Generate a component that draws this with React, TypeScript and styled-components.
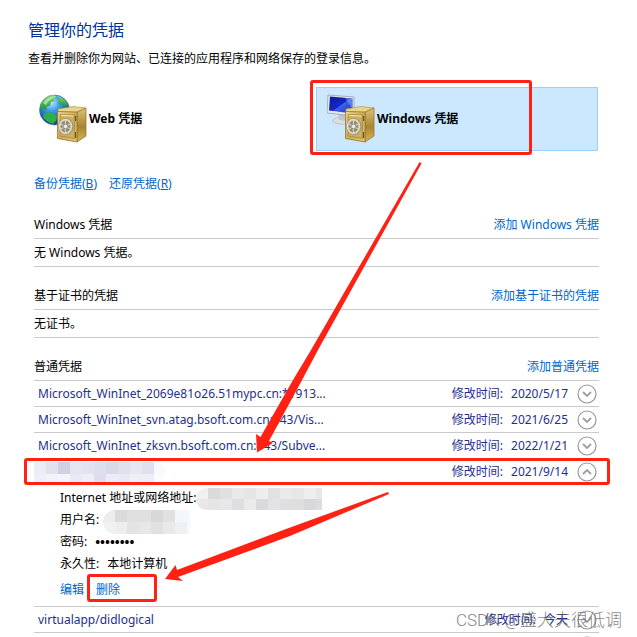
import React from "react";
import styled, { createGlobalStyle } from "styled-components";

const RED = "#ff2214";

const Global = createGlobalStyle`
  * { box-sizing: border-box; }
  html, body { margin: 0; background: #fff; }
  body {
    font-family: "Noto Sans", "Noto Sans CJK SC", sans-serif;
    font-size: 12px;
    line-height: 20px;
    color: #000;
  }
  h1, h2, p, ul, dl, dd { margin: 0; padding: 0; font-weight: 400; }
  button { font: inherit; color: inherit; background: none; border: 0; padding: 0; text-align: left; }
`;

const Page = styled.main`
  position: relative;
  height: 100vh;
  overflow: hidden;
  padding: 16px 38px 0 28px;
`;

const Title = styled.h1`
  font-size: 16px;
  line-height: 28px;
  color: #003399;
`;

const Intro = styled.p`
  margin-top: 5px;
`;

const Tiles = styled.div`
  display: grid;
  grid-template-columns: 1fr 1fr;
  gap: 6px;
  margin: 18px 1px 0 0;
`;

const Tile = styled.button<{ $selected?: boolean }>`
  position: relative;
  display: flex;
  align-items: center;
  gap: 2px;
  height: 64px;
  padding: 0 10px;
  border: 1px solid ${(p) => (p.$selected ? "#99d1ff" : "transparent")};
  background: ${(p) => (p.$selected ? "#cce8ff" : "transparent")};
  font-weight: 700;
`;

const Link = styled.a`
  color: #0066cc;
  text-decoration: none;
`;

const Actions = styled.nav`
  display: flex;
  gap: 12px;
  margin: 23px 0 0 6px;
`;

const Section = styled.section`
  margin-left: 6px;
`;

const SectionHead = styled.header<{ $gap: number }>`
  display: flex;
  justify-content: space-between;
  margin-top: ${(p) => p.$gap}px;
  padding-bottom: 3px;
  border-bottom: 1px solid #cacaca;
`;

const SectionTitle = styled.h2`
  font-size: 12px;
`;

const Empty = styled.p`
  padding: 4px 0 3px;
  border-bottom: 1px solid #cacaca;
`;

const List = styled.ul`
  list-style: none;
`;

const Item = styled.li`
  position: relative;
  border-bottom: 1px solid #cacaca;
`;

const Row = styled.div<{ $flush?: boolean }>`
  position: relative;
  display: flex;
  align-items: center;
  height: 25px;
  padding: 0 2px 0 ${(p) => (p.$flush ? 0 : 4)}px;
  color: #1f2f8c;
`;

const Name = styled.span`
  flex: 1;
`;

const Stamp = styled.span`
  display: flex;
  gap: 8px;
  margin-right: 9px;
`;

const Toggle = styled.button`
  display: flex;
`;

const Details = styled.dl`
  padding: 4px 0 0 26px;
`;

const Field = styled.div<{ $gap?: number }>`
  display: flex;
  gap: ${(p) => p.$gap ?? 8}px;
  height: 22px;
`;

const Password = styled.dd`
  font-size: 13px;
  font-weight: 700;
`;

const ItemActions = styled.div`
  display: flex;
  gap: 12px;
  padding: 4px 0 6px 26px;
`;

const Marked = styled.span`
  position: relative;
`;

const Mark = styled.span<{ $inset: string }>`
  position: absolute;
  inset: ${(p) => p.$inset};
  border: 3px solid ${RED};
  border-radius: 3px;
  pointer-events: none;
`;

const Arrows = styled.svg`
  position: absolute;
  top: 0;
  left: 0;
  pointer-events: none;
`;

const Watermark = styled.div`
  position: absolute;
  right: 15px;
  bottom: 5px;
  font: 300 17px/24px Roboto, "Noto Sans CJK SC", sans-serif;
  color: rgba(100, 100, 100, 0.8);
  white-space: nowrap;
  pointer-events: none;
`;

const MosaicSvg = styled.svg`
  display: block;
  flex: none;
`;

function Mosaic({ id, width, height, cell, rows, left = 0, right = 0 }: {
  id: string; width: number; height: number; cell: number; rows: string[][]; left?: number; right?: number;
}) {
  const r = height / 2;
  const d = `M${left ? r : 0} 0H${width - (right ? r : 0)}${right ? `A${r} ${r} 0 0 1 ${width - r} ${height}` : `V${height}`}H${left ? r : 0}${left ? `A${r} ${r} 0 0 1 ${r} 0` : ""}Z`;
  return (
    <MosaicSvg width={width} height={height} aria-hidden="true" shapeRendering="crispEdges">
      <clipPath id={id}><path d={d} /></clipPath>
      <g clipPath={`url(#${id})`}>
        {rows.map((row, y) => row.map((c, x) => (
          <rect key={`${x}-${y}`} x={x * 12} y={y * cell} width="12" height={cell} fill={c} />
        )))}
      </g>
    </MosaicSvg>
  );
}

function Safe() {
  return (
    <g>
      <path d="M19 15 34 12.500 47 14 38 18.500 19 18Z" fill="#e8d48c" stroke="#a98a35" strokeWidth=".6" />
      <path d="M38 18 47 14V42L38 48Z" fill="url(#safeSide)" stroke="#8c6d1f" strokeWidth=".7" />
      <path d="M18.500 17.500 38 18V48L18.500 44.500Z" fill="url(#safeFront)" stroke="#95762a" strokeWidth=".8" />
      <path d="M21 20.500 35.500 21V44.500L21 42Z" fill="#cfae59" stroke="#a3833a" strokeWidth=".7" />
      <path d="M22 21.500 34.500 22" stroke="#f6e8ac" strokeWidth="1" />
      <path d="M36.600 22v5M36.600 38v6" stroke="#5c4718" strokeWidth="1" />
      <ellipse cx="27" cy="32.500" rx="7.200" ry="8" fill="#b8a46a" stroke="#858585" strokeWidth=".6" />
      <ellipse cx="26.500" cy="32.500" rx="5.900" ry="6.800" fill="#9d8a56" stroke="#d9dbdd" strokeWidth="1.700" />
      <path d="M26.500 26v13M20.800 29.500 32.300 35.500M20.800 35.500 32.300 29.500" stroke="#cfd2d6" strokeWidth="1.300" />
      <circle cx="26.500" cy="32.500" r="2.200" fill="#eceef0" stroke="#707377" strokeWidth=".6" />
    </g>
  );
}

function Defs() {
  return (
    <defs>
      <radialGradient id="globe" cx=".4" cy=".25" r=".8">
        <stop offset="0" stopColor="#b5eaff" /><stop offset=".35" stopColor="#3b9ee6" />
        <stop offset=".75" stopColor="#164fb4" /><stop offset="1" stopColor="#0c2f7c" />
      </radialGradient>
      <linearGradient id="land" x2="0" y2="1">
        <stop stopColor="#8bd66a" /><stop offset="1" stopColor="#16903a" />
      </linearGradient>
      <linearGradient id="screen" x2="1" y2="1">
        <stop stopColor="#0b1a9e" /><stop offset=".5" stopColor="#1528c4" /><stop offset=".52" stopColor="#3f62e8" /><stop offset="1" stopColor="#1430c8" />
      </linearGradient>
      <linearGradient id="safeFront" x2="1" y2="1">
        <stop stopColor="#ecd78f" /><stop offset=".5" stopColor="#cfac54" /><stop offset="1" stopColor="#e2c878" />
      </linearGradient>
      <linearGradient id="safeSide" x2="0" y2="1">
        <stop stopColor="#dcc477" /><stop offset=".55" stopColor="#a98532" /><stop offset="1" stopColor="#d6b65b" />
      </linearGradient>
    </defs>
  );
}

function WebIcon() {
  return (
    <svg width="48" height="50" viewBox="0 0 48 50" aria-hidden="true">
      <Defs />
      <circle cx="15.500" cy="16" r="15" fill="url(#globe)" stroke="#3f75ad" strokeWidth=".6" />
      <path d="M2 9C5 4 10 1 15 1L17 3 14 5 16 7 12 8 11 12 8 12 7 16 4 15 2 17Q1 12 2 9Z" fill="url(#land)" />
      <path d="M18 2 22 3 27 7 29 11 26 13 23 10 20 11 19 7 21 5Z" fill="url(#land)" />
      <path d="M5 20 10 18 15 20 18 23 17 27 14 30Q7 28 4 23Z" fill="#2fb045" />
      <path d="M4 9Q9 2 18 2 10 5 7 11Z" fill="#e5fbe5" opacity=".55" />
      <Safe />
    </svg>
  );
}

function WindowsIcon() {
  return (
    <svg width="48" height="50" viewBox="0 0 48 50" aria-hidden="true">
      <path d="M5 27Q11 21 19 24V30Q10 31 5 27Z" fill="#dcdfe2" stroke="#a8afb5" strokeWidth=".6" />
      <path d="M11 18 18 19V27L12 26Z" fill="#bfc5ca" />
      <path d="M1 1 27 3V22L0 19Z" fill="#e4e8ec" stroke="#8e9aa6" strokeWidth=".7" />
      <path d="M3 2.500 25.500 4.500V19.500L2 16.500Z" fill="url(#screen)" />
      <path d="M18 4 25.500 4.500V15Z" fill="#82a4f4" opacity=".55" />
      <Safe />
    </svg>
  );
}

function Chevron({ up }: { up?: boolean }) {
  return (
    <svg width="20" height="20" viewBox="0 0 20 20" fill="none" aria-hidden="true">
      <circle cx="10" cy="10" r="9" stroke="#999" strokeWidth="1.200" />
      <path d={up ? "M6 12 10 8 14 12" : "M6 8 10 12 14 8"} stroke="#a0a0a0" strokeWidth="1.800" />
    </svg>
  );
}

function CredentialRow({ name, date, open, children }: {
  name?: string; date?: string; open?: boolean; children?: React.ReactNode;
}) {
  return (
    <Row $flush={open}>
      <Name>{children ?? name}</Name>
      {date && <Stamp><span>修改时间:</span><span>{date}</span></Stamp>}
      <Toggle aria-label={open ? "收起" : "展开"} aria-expanded={!!open}><Chevron up={open} /></Toggle>
      {open && <Mark $inset="-1px -11px -1px -10px" />}
    </Row>
  );
}

const credentials = [
  { name: "Microsoft_WinInet_2069e81o26.51mypc.cn:*1913...", date: "2020/5/17" },
  { name: "Microsoft_WinInet_svn.atag.bsoft.com.cn:443/Vis...", date: "2021/6/25" },
  { name: "Microsoft_WinInet_zksvn.bsoft.com.cn:443/Subve...", date: "2022/1/21" },
];

const nameMosaic = [
  ["#ececf6", "#e1e2ee", "#d0d0e5", "#e4e5f2", "#e0e3f0", "#dedfec", "#d9dae8", "#e0e0ed", "#e7e7f3", "#e0e1ee", "#f8f9fd"],
  ["#eeeef6", "#f2f2f8", "#f3f3f9", "#e9e9f3", "#eeeef6", "#dfdded", "#ececf5", "#e9e9f3", "#eeeef6", "#ededf6", "#fafbfe"],
];
const addressMosaic = [
  ["#f0f0f1", "#dadadd", "#e0e0e2", "#e9e9ea", "#e5e5e6", "#ededee", "#e1e1e3", "#eaeaeb", "#e7e7e8", "#eeeeef", "#e7e7e8"],
  ["#e8e8e9", "#e5e5e6", "#e7e7e8", "#dedee0", "#ebebec", "#dadadc", "#e3e3e5", "#dfdfe1", "#dededf", "#d8d8da", "#dcdcde"],
];
const userMosaic = [
  ["#ededee", "#dadadc", "#e0e0e1", "#dfe0e2", "#d8d8d9", "#e1e1e2", "#f3f7fa", "#f3f9fd"],
  ["#f1f1f2", "#eeeeef", "#e3e3e4", "#e7e7e8", "#e1e1e2", "#e9e9ea", "#eef1f4", "#f5fafe"],
];

export default function App() {
  return (
    <Page>
      <Global />
      <Title>管理你的凭据</Title>
      <Intro>查看并删除你为网站、已连接的应用程序和网络保存的登录信息。</Intro>
      <Tiles>
        <Tile><WebIcon />Web 凭据</Tile>
        <Tile $selected>
          <WindowsIcon />Windows 凭据
          <Mark $inset="-8px 65px -5px -7px" />
        </Tile>
      </Tiles>
      <Actions>
        <Link href="#backup">备份凭据(<u>B</u>)</Link>
        <Link href="#restore">还原凭据(<u>R</u>)</Link>
      </Actions>
      <Section>
        <SectionHead $gap={21}>
          <SectionTitle>Windows 凭据</SectionTitle>
          <Link href="#add-windows">添加 Windows 凭据</Link>
        </SectionHead>
        <Empty>无 Windows 凭据。</Empty>
      </Section>
      <Section>
        <SectionHead $gap={19}>
          <SectionTitle>基于证书的凭据</SectionTitle>
          <Link href="#add-certificate">添加基于证书的凭据</Link>
        </SectionHead>
        <Empty>无证书。</Empty>
      </Section>
      <Section>
        <SectionHead $gap={19}>
          <SectionTitle>普通凭据</SectionTitle>
          <Link href="#add-generic">添加普通凭据</Link>
        </SectionHead>
        <List>
          {credentials.map((c) => (
            <Item key={c.name}><CredentialRow {...c} /></Item>
          ))}
          <Item>
            <CredentialRow date="2021/9/14" open>
              <Mosaic id="name" width={132} height={20} cell={12} rows={nameMosaic} right={1} />
            </CredentialRow>
            <Details>
              <Field $gap={0}>
                <dt>Internet 地址或网络地址:</dt>
                <dd><Mosaic id="address" width={126} height={22} cell={11} rows={addressMosaic} left={1} /></dd>
              </Field>
              <Field $gap={4}>
                <dt>用户名:</dt>
                <dd><Mosaic id="user" width={87} height={24} cell={12} rows={userMosaic} left={1} /></dd>
              </Field>
              <Field><dt>密码:</dt><Password>••••••••</Password></Field>
              <Field><dt>永久性:</dt><dd>本地计算机</dd></Field>
            </Details>
            <ItemActions>
              <Link href="#edit">编辑</Link>
              <Marked>
                <Link href="#delete">删除</Link>
                <Mark $inset="-6px -37px -2px -9px" />
              </Marked>
            </ItemActions>
          </Item>
          <Item><CredentialRow name="virtualapp/didlogical" date="今天" /></Item>
          <Item><CredentialRow /></Item>
        </List>
      </Section>
      <Arrows width="637" height="637" viewBox="0 0 637 637" fill={RED} aria-hidden="true">
        <path d="M420 162 421.500 163.500 318 350 301 382 269 441 273 443 257 452.500 256 434 260.500 437 293 380 311 350 419 163Z" />
        <path d="M388 492 389 494 290 536 178 577 183 581 165 579 175.500 565 177 570 286 529Z" />
      </Arrows>
      <Watermark>CSDN @盛大夫很低调</Watermark>
    </Page>
  );
}
